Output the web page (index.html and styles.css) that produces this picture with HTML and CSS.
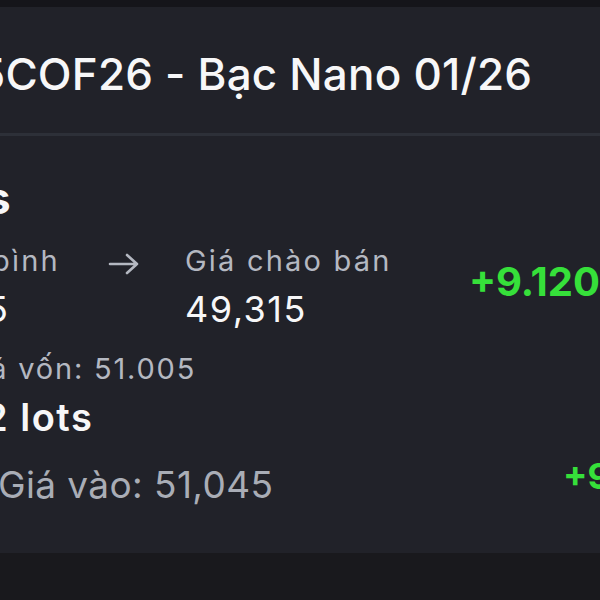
FILE: index.html
```html
<!DOCTYPE html>
<html lang="vi">
<head>
<meta charset="utf-8">
<link rel="stylesheet" href="styles.css">
</head>
<body>
<div class="screen">
  <div class="topstrip"></div>
  <header class="header">
    <h1 class="title">5COF26 - Bạc Nano 01/26</h1>
  </header>
  <div class="divider"></div>
  <main class="panel">
    <div class="heading">s</div>
    <div class="quote">
      <div class="cols">
        <div class="col col-a">
          <div class="label">bình</div>
          <div class="value value-a">5</div>
        </div>
        <div class="arrow">
          <svg width="32" height="24" viewBox="0 0 32 24"><path d="M2 12H29M19 3l10 9-10 9" fill="none" stroke="#b4b8c1" stroke-width="2.6" stroke-linecap="round" stroke-linejoin="round"/></svg>
        </div>
        <div class="col col-b">
          <div class="label">Giá chào bán</div>
          <div class="value">49,315</div>
        </div>
      </div>
      <div class="pnl">+9.120</div>
    </div>
    <div class="cost">Giá vốn: 51.005</div>
    <div class="lots">2 lots</div>
    <div class="entry">
      <div class="entry-text">Giá vào: 51,045</div>
      <div class="pnl-small">+9</div>
    </div>
  </main>
  <div class="footer"></div>
</div>
</body>
</html>
```
FILE: styles.css
```css
html, body {
  margin: 0;
  padding: 0;
}
body {
  width: 600px;
  height: 600px;
  overflow: hidden;
  background: #18181d;
  font-family: Inter, "Noto Sans", sans-serif;
}
.screen {
  width: 600px;
  height: 600px;
  overflow: hidden;
  display: flex;
  flex-direction: column;
}
.topstrip {
  height: 7px;
  background: #15151a;
  flex: none;
}
.header {
  height: 126px;
  flex: none;
  background: #212229;
  display: flex;
  align-items: center;
}
.title {
  margin: 0 0 0 -22px;
  padding-top: 8px;
  font-size: 44px;
  font-weight: 500;
  color: #f7f7f8;
  letter-spacing: 0.2px;
  white-space: nowrap;
}
.divider {
  height: 3px;
  flex: none;
  background: #2d3038;
}
.panel {
  height: 417px;
  flex: none;
  background: #212229;
  overflow: hidden;
}
.heading {
  margin: 40px 0 0 -14px;
  font-size: 44px;
  font-weight: 700;
  line-height: 44px;
  color: #f7f7f8;
}
.quote {
  display: flex;
  align-items: center;
  margin-top: 24px;
}
.cols {
  display: flex;
  align-items: flex-start;
  width: 470px;
}
.col-a {
  width: 108px;
  margin-left: -8px;
}
.label {
  font-size: 29px;
  line-height: 34px;
  color: #b4b8c1;
  letter-spacing: 2.2px;
  white-space: nowrap;
}
.value {
  margin-top: 11px;
  font-size: 36px;
  line-height: 40px;
  color: #f7f7f8;
  letter-spacing: 1.5px;
  white-space: nowrap;
}
.value-a {
  margin-left: -6px;
}
.arrow {
  width: 32px;
  margin: 8px 0 0 8px;
}
.col-b {
  margin-left: 45px;
}
.pnl {
  font-size: 40px;
  font-weight: 700;
  line-height: 40px;
  color: #36e03a;
  margin-bottom: 10px;
  white-space: nowrap;
}
.cost {
  margin: 23px 0 0 -42px;
  font-size: 29px;
  line-height: 34px;
  color: #b4b8c1;
  letter-spacing: 1.8px;
  white-space: nowrap;
}
.lots {
  margin: 11px 0 0 -16px;
  font-size: 38px;
  font-weight: 600;
  line-height: 40px;
  color: #f7f7f8;
  letter-spacing: 1.5px;
  white-space: nowrap;
}
.entry {
  margin-top: 26px;
  display: flex;
  align-items: flex-start;
  justify-content: space-between;
}
.entry-text {
  margin-left: -2px;
  font-size: 37px;
  line-height: 44px;
  color: #a9adb6;
  letter-spacing: 0.4px;
  white-space: nowrap;
}
.pnl-small {
  margin: -7px -40px 0 0;
  font-size: 36px;
  font-weight: 700;
  line-height: 40px;
  color: #36e03a;
  white-space: nowrap;
  width: 77px;
}
.footer {
  flex: 1;
  background: #19191d;
}
```
